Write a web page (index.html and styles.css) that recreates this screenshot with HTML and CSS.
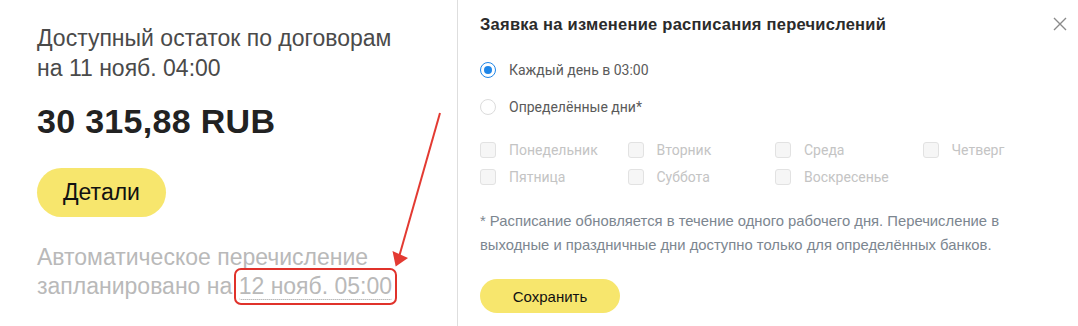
FILE: index.html
```html
<!DOCTYPE html>
<html lang="ru">
<head>
<meta charset="utf-8">
<title>Расписание перечислений</title>
<link rel="stylesheet" href="styles.css">
</head>
<body>
<div class="page">
  <section class="balance">
    <h1 class="balance-title">Доступный остаток по договорам<br>на 11 нояб. 04:00</h1>
    <div class="amount">30 315,88 RUB</div>
    <button class="btn btn-details">Детали</button>
    <p class="auto-note">Автоматическое перечисление<br>запланировано на <span class="auto-date">12 нояб. 05:00</span></p>
  </section>

  <section class="panel">
    <div class="panel-head">
      <h2 class="panel-title">Заявка на изменение расписания перечислений</h2>
      <button class="close" aria-label="Закрыть">
        <svg width="14" height="14" viewBox="0 0 14 14"><path d="M1 1L13 13M13 1L1 13" stroke="#8a8a8a" stroke-width="1.4" fill="none"/></svg>
      </button>
    </div>

    <label class="radio-row"><span class="radio checked"></span><span class="radio-label">Каждый день в 03:00</span></label>
    <label class="radio-row"><span class="radio"></span><span class="radio-label">Определённые дни*</span></label>

    <div class="days">
      <label class="day"><span class="check"></span>Понедельник</label>
      <label class="day"><span class="check"></span>Вторник</label>
      <label class="day"><span class="check"></span>Среда</label>
      <label class="day"><span class="check"></span>Четверг</label>
      <label class="day"><span class="check"></span>Пятница</label>
      <label class="day"><span class="check"></span>Суббота</label>
      <label class="day"><span class="check"></span>Воскресенье</label>
    </div>

    <p class="panel-note">* Расписание обновляется в течение одного рабочего дня. Перечисление в выходные и праздничные дни доступно только для определённых банков.</p>

    <button class="btn btn-save">Сохранить</button>
  </section>

  <svg class="annot-arrow" width="1078" height="326" viewBox="0 0 1078 326">
    <line x1="440" y1="113" x2="399" y2="257" stroke="#e33a32" stroke-width="2"/>
    <polygon points="392.5,251 408,258 395.7,266.5" fill="#e33a32"/>
  </svg>
</div>
</body>
</html>
```

FILE: styles.css
```css
html, body {
  margin: 0;
  padding: 0;
  background: #ffffff;
}

.page {
  position: relative;
  width: 1078px;
  height: 326px;
  display: flex;
  overflow: hidden;
  font-family: "Liberation Sans", Arial, sans-serif;
}

.balance {
  width: 420px;
  padding: 23px 0 0 37px;
  box-sizing: content-box;
}

.balance-title {
  margin: 0;
  font-size: 23px;
  line-height: 30px;
  font-weight: normal;
  color: #4a4a4a;
}

.amount {
  margin-top: 18px;
  font-size: 34px;
  line-height: 40px;
  letter-spacing: 0.3px;
  font-weight: bold;
  color: #222222;
}

.btn {
  border: none;
  font-family: "Liberation Sans", Arial, sans-serif;
  background: #f7e66d;
  color: #111111;
  cursor: pointer;
  padding: 0;
}

.btn-details {
  display: block;
  margin-top: 27px;
  width: 129px;
  height: 49px;
  border-radius: 25px;
  font-size: 23px;
}

.auto-note {
  margin: 26px 0 0;
  font-size: 23px;
  line-height: 29px;
  color: #b9b9b9;
}

.auto-date {
  border-bottom: 1px dotted #9a9a9a;
  outline: 2px solid #e0322b;
  outline-offset: 3px;
  border-radius: 2px;
}

.panel {
  flex: 1;
  border-left: 1px solid #dedede;
  padding: 14px 0 0 22px;
}

.panel-head {
  display: flex;
  justify-content: space-between;
  align-items: flex-start;
  padding-right: 11px;
}

.panel-title {
  margin: 0;
  font-size: 16.5px;
  line-height: 20px;
  letter-spacing: 0.25px;
  font-weight: bold;
  color: #2b2b2b;
}

.close {
  border: none;
  background: none;
  padding: 0;
  margin-top: 3px;
  width: 14px;
  height: 14px;
  display: flex;
}

.radio-row {
  display: flex;
  align-items: center;
  height: 24px;
  margin-top: 13px;
  font-family: Roboto, "Liberation Sans", sans-serif;
  font-size: 14px;
  color: #5a5a5a;
}

.radio-row:first-of-type {
  margin-top: 24px;
}

.radio {
  width: 14px;
  height: 14px;
  border: 1px solid #dcdcdc;
  border-radius: 50%;
  margin-right: 13px;
  position: relative;
  flex: none;
}

.radio.checked {
  border-color: #1f86e8;
}

.radio.checked::after {
  content: "";
  position: absolute;
  left: 3px;
  top: 3px;
  width: 8px;
  height: 8px;
  border-radius: 50%;
  background: #1f86e8;
}

.days {
  display: grid;
  grid-template-columns: repeat(4, 147.5px);
  row-gap: 7px;
  margin-top: 21px;
}

.day {
  display: flex;
  align-items: center;
  height: 20px;
  font-family: Roboto, "Liberation Sans", sans-serif;
  font-size: 14px;
  color: #c4c4c4;
}

.check {
  width: 14px;
  height: 14px;
  border: 1px solid #e2e2e2;
  border-radius: 3px;
  background: #f6f6f6;
  margin-right: 13px;
  flex: none;
}

.panel-note {
  margin: 22px 0 0;
  width: 540px;
  font-size: 14.8px;
  line-height: 24px;
  color: #7c8690;
}

.btn-save {
  display: block;
  margin-top: 22px;
  width: 140px;
  height: 34px;
  border-radius: 17px;
  font-size: 15px;
}

.annot-arrow {
  position: absolute;
  left: 0;
  top: 0;
  pointer-events: none;
}
```
